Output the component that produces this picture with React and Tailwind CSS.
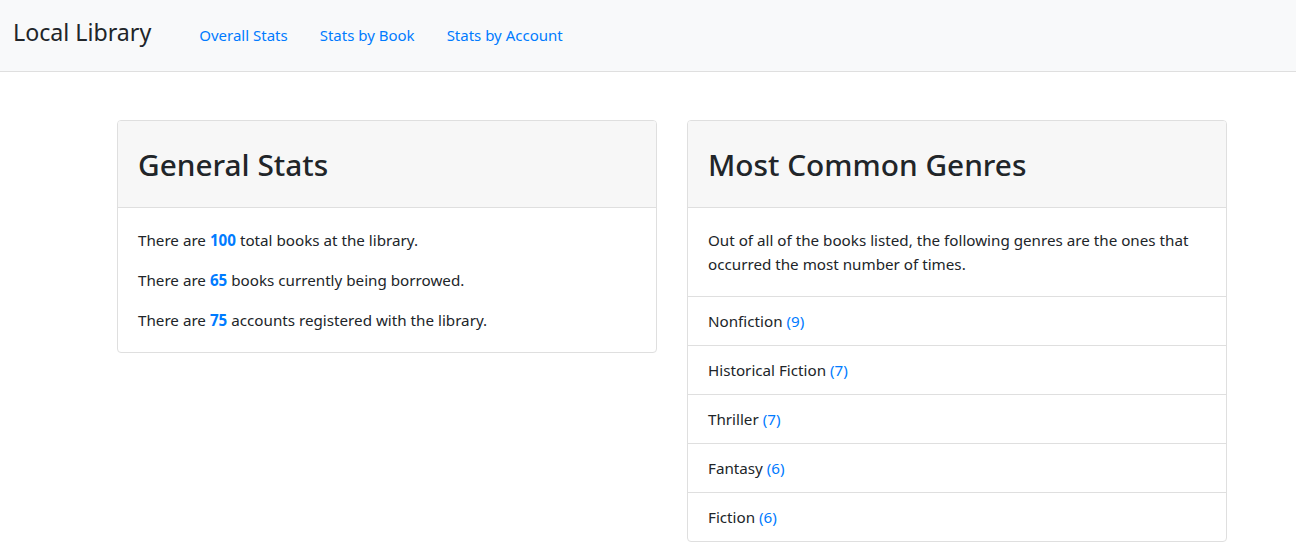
import React from "react";

export default function App() {
  const genres = [
    ["Nonfiction", 9],
    ["Historical Fiction", 7],
    ["Thriller", 7],
    ["Fantasy", 6],
    ["Fiction", 6],
  ];
  return (
    <div className="min-h-[556px] bg-white text-[#212529] font-['Noto_Sans',sans-serif]">
      <nav className="h-[72px] bg-[#f8f9fa] border-b border-[#dfdfdf] flex items-center pl-[13px]">
        <span className="text-[23.2px] leading-none mr-[48px] -mt-[5px]">Local Library</span>
        <div className="flex gap-[32px] text-[15px] text-[#007bff]">
          <a href="#">Overall Stats</a>
          <a href="#">Stats by Book</a>
          <a href="#">Stats by Account</a>
        </div>
      </nav>
      <main className="pl-[117px] pt-[48px] flex gap-[30px] items-start">
        <section className="w-[540px] border border-[#dfdfdf] rounded-[4px] overflow-hidden">
          <header className="bg-[#f7f7f7] border-b border-[#dfdfdf] px-[20px] pt-[25px] pb-[23px]">
            <h1 className="text-[29.8px] leading-[38px] font-medium">General Stats</h1>
          </header>
          <div className="px-[20px] py-[20px] text-[15.2px] leading-[24px] flex flex-col gap-[16px]">
            <p>There are <b className="text-[#007bff] font-bold">100</b> total books at the library.</p>
            <p>There are <b className="text-[#007bff] font-bold">65</b> books currently being borrowed.</p>
            <p>There are <b className="text-[#007bff] font-bold">75</b> accounts registered with the library.</p>
          </div>
        </section>
        <section className="w-[540px] border border-[#dfdfdf] rounded-[4px] overflow-hidden">
          <header className="bg-[#f7f7f7] border-b border-[#dfdfdf] px-[20px] pt-[25px] pb-[23px]">
            <h1 className="text-[29.8px] leading-[38px] font-medium">Most Common Genres</h1>
          </header>
          <div className="px-[20px] py-[20px] text-[15.2px] leading-[24px]">
            <p>Out of all of the books listed, the following genres are the ones that occurred the most number of times.</p>
          </div>
          <ul className="text-[15.2px] leading-[24px]">
            {genres.map(([g, n]) => (
              <li key={g} className="border-t border-[#dfdfdf] px-[20px] py-[12px]">
                {g} <span className="text-[#007bff]">({n})</span>
              </li>
            ))}
          </ul>
        </section>
      </main>
    </div>
  );
}
